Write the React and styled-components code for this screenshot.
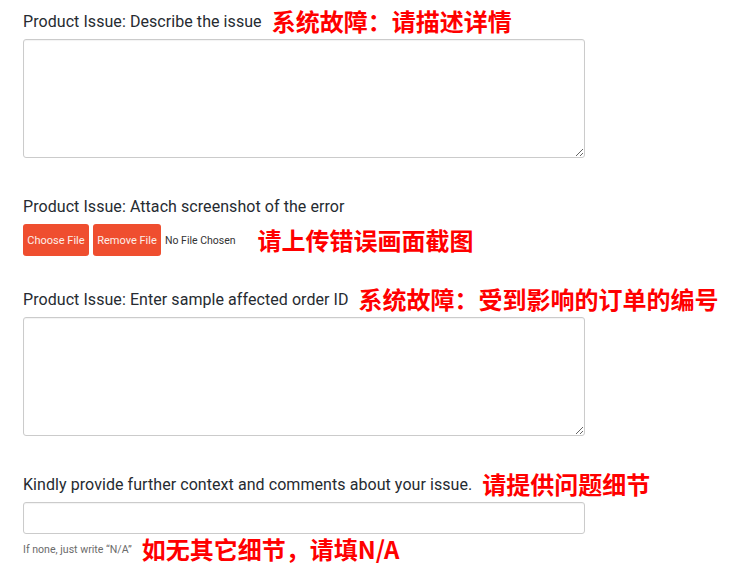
import React from "react";
import styled, { createGlobalStyle } from "styled-components";

const Global = createGlobalStyle`
  html, body { margin: 0; padding: 0; background: #fff; }
  body { font-family: Roboto, "Noto Sans", sans-serif; }
  * { box-sizing: border-box; }
`;

const Page = styled.div`
  padding: 6px 0 0 23px;
  width: 730px;
`;

const Field = styled.section`
  display: flex;
  flex-direction: column;
  margin-bottom: ${(p) => p.$after}px;
`;

const LabelRow = styled.div`
  display: flex;
  align-items: center;
  height: 30px;
  margin-bottom: 3px;
`;

const Label = styled.label`
  font-size: 16px;
  letter-spacing: 0.065px;
  color: #262b31;
  font-family: Roboto, sans-serif;
`;

const Note = styled.span`
  color: #ff0000;
  font-family: "Noto Sans CJK SC", sans-serif;
  font-weight: 700;
  font-size: 24px;
  line-height: 30px;
  margin-left: ${(p) => p.$ml ?? 10}px;
  white-space: nowrap;
`;

const TextArea = styled.textarea`
  width: 562px;
  height: 119px;
  border: 1px solid #cbcbcb;
  border-radius: 3px;
  box-shadow: inset 0 1px 1px rgba(0,0,0,0.05);
  resize: vertical;
  display: block;
  margin: 0;
  font-family: Roboto, sans-serif;
`;

const TextInput = styled.input`
  width: 562px;
  height: 32px;
  border: 1px solid #cbcbcb;
  border-radius: 3px;
  box-shadow: inset 0 1px 1px rgba(0,0,0,0.05);
  margin: 0;
  display: block;
`;

const FileRow = styled.div`
  display: flex;
  align-items: center;
  height: 32px;
`;

const FileButton = styled.button`
  height: 32px;
  width: ${(p) => p.$w}px;
  margin-right: 4px;
  padding: 0;
  border: none;
  border-radius: 3px;
  background: #ef4e2f;
  color: #fdeee9;
  font-family: Roboto, sans-serif;
  font-size: 11px;
`;

const FileStatus = styled.span`
  font-size: 10.5px;
  color: #333;
  font-family: Roboto, sans-serif;
`;

const HelpRow = styled.div`
  display: flex;
  align-items: center;
  height: 30px;
`;

const Help = styled.span`
  font-size: 10.6px;
  color: #6b6b6b;
  font-family: Roboto, sans-serif;
`;

export default function App() {
  return (
    <>
      <Global />
      <Page>
        <Field $after={33}>
          <LabelRow>
            <Label>Product Issue: Describe the issue</Label>
            <Note>系统故障：请描述详情</Note>
          </LabelRow>
          <TextArea />
        </Field>
        <Field $after={28}>
          <LabelRow>
            <Label>Product Issue: Attach screenshot of the error</Label>
          </LabelRow>
          <FileRow>
            <FileButton $w={66}>Choose File</FileButton>
            <FileButton $w={68}>Remove File</FileButton>
            <FileStatus>No File Chosen</FileStatus>
            <Note $ml={22}>请上传错误画面截图</Note>
          </FileRow>
        </Field>
        <Field $after={33}>
          <LabelRow>
            <Label>Product Issue: Enter sample affected order ID</Label>
            <Note>系统故障：受到影响的订单的编号</Note>
          </LabelRow>
          <TextArea />
        </Field>
        <Field $after={0}>
          <LabelRow>
            <Label>Kindly provide further context and comments about your issue.</Label>
            <Note>请提供问题细节</Note>
          </LabelRow>
          <TextInput />
          <HelpRow>
            <Help>If none, just write “N/A”</Help>
            <Note>如无其它细节，请填N/A</Note>
          </HelpRow>
        </Field>
      </Page>
    </>
  );
}
